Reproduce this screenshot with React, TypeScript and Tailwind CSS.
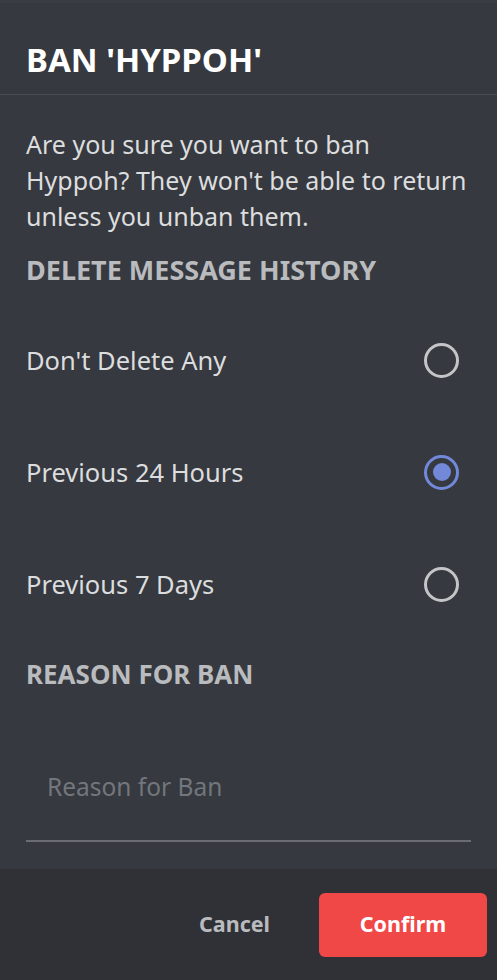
import React from "react";

function Radio({ checked }: { checked?: boolean }) {
  if (checked) {
    return (
      <div className="w-[35px] h-[35px] rounded-full border-[3px] border-[#7289da] flex items-center justify-center">
        <div className="w-[18px] h-[18px] rounded-full bg-[#7289da]" />
      </div>
    );
  }
  return <div className="w-[35px] h-[35px] rounded-full border-[3px] border-[#c4c5c7]" />;
}

export default function App() {
  const options = [
    { label: "Don't Delete Any", checked: false },
    { label: "Previous 24 Hours", checked: true },
    { label: "Previous 7 Days", checked: false },
  ];
  return (
    <div
      className="w-[497px] h-[980px] bg-[#36393f] flex flex-col overflow-hidden"
      style={{ fontFamily: '"Noto Sans", "Open Sans", sans-serif' }}
    >
      <div className="h-[95px] border-b border-[#4a4c52] flex items-center px-[26px] pt-[22px] border-t-[3px] border-t-[#3a3d43]">
        <h1 className="text-[33px] font-bold text-white leading-none">BAN 'HYPPOH'</h1>
      </div>
      <div className="flex-1 flex flex-col px-[26px]">
        <p className="mt-[31px] text-[25px] leading-[36px] text-[#dcddde] whitespace-nowrap">
          Are you sure you want to ban
          <br />
          Hyppoh? They won't be able to return
          <br />
          unless you unban them.
        </p>
        <div className="mt-[20px] text-[27px] font-bold leading-[32px] text-[#b9bbbe]">
          DELETE MESSAGE HISTORY
        </div>
        <div className="flex flex-col mt-[18px]">
          {options.map((o) => (
            <div key={o.label} className="h-[112px] flex items-center justify-between pr-[12px]">
              <span className="text-[25.5px] text-[#dcddde]">{o.label}</span>
              <Radio checked={o.checked} />
            </div>
          ))}
        </div>
        <div className="mt-[18px] text-[26px] font-bold leading-[32px] text-[#b9bbbe]">
          REASON FOR BAN
        </div>
        <div className="mt-[31px] border-b-2 border-[#6a6c71] h-[121px] flex items-center pt-[13px]">
          <span className="pl-[21px] text-[24.5px] text-[#72767d]">Reason for Ban</span>
        </div>
      </div>
      <div className="h-[111px] bg-[#2f3136] flex items-center justify-end pr-[10px] gap-[49px]">
        <button className="text-[21.5px] font-bold text-[#b9bbbe]">Cancel</button>
        <button className="w-[168px] h-[64px] rounded-[6px] bg-[#f04747] text-white text-[21.5px] font-bold">
          Confirm
        </button>
      </div>
    </div>
  );
}
